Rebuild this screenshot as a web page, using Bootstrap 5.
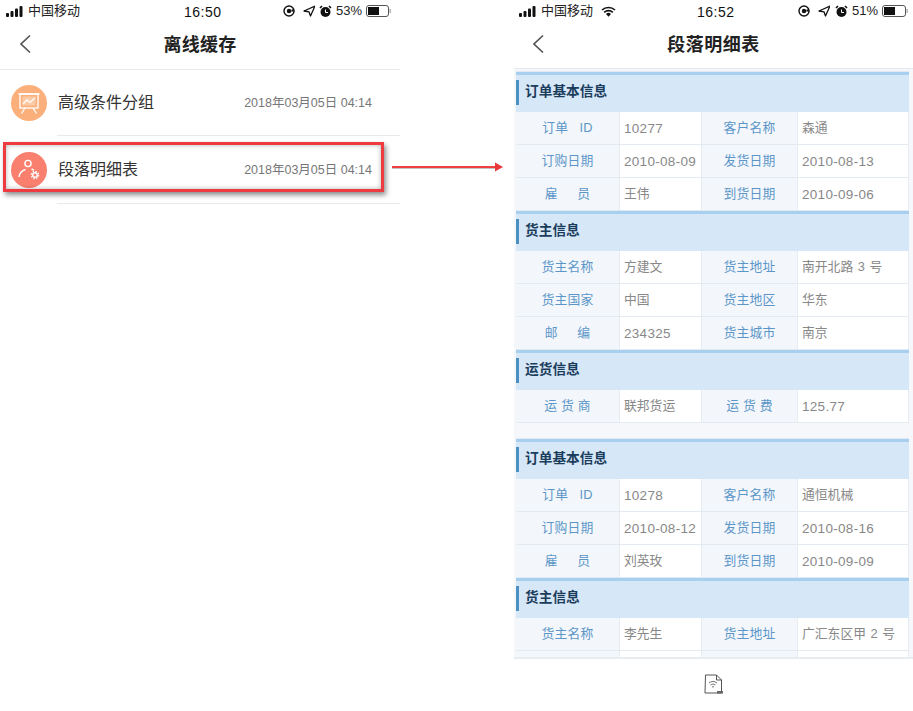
<!DOCTYPE html>
<html lang="zh-CN">
<head>
<meta charset="utf-8">
<title>离线缓存</title>
<link href="https://cdn.jsdelivr.net/npm/bootstrap@5.3.0/dist/css/bootstrap.min.css" rel="stylesheet">
<style>
html,body{margin:0;height:711px;overflow:hidden;background:#fff}
body{font-family:"Liberation Sans","Noto Sans CJK SC",sans-serif;color:#333;position:relative}
.stage{height:711px;gap:114px}
.phone-l{width:400px;flex:none}
.phone-r{width:399px;flex:none}
.sbar{height:22px;font-size:13px;color:#222;position:relative;padding-top:0}
.sbar-l,.sbar-r{position:absolute;top:3px;display:flex;align-items:center;gap:4px;height:16px}
.sbar-pct{font-size:13px}
.sbar-time{position:absolute;top:2px;font-size:14px;font-weight:400;letter-spacing:.5px;color:#111}
.navrow{height:46px;position:relative}
.navtitle{font-size:18px;font-weight:700;letter-spacing:.2px;color:#222;line-height:46px}
.navtitle-wide{letter-spacing:.5px}
.backbtn{position:absolute;top:12px}
.rowline{border-top:1px solid #e9e9e9;margin-top:1px}
.item{position:relative;display:flex;align-items:center;padding-left:11px;background:#fff}
.item::after{content:"";position:absolute;left:57px;right:0;bottom:0;height:1px;background:#e9e9e9}
.item-1{height:66px}
.item-2{height:68px}
.item-name{font-size:16px;margin-left:11px;color:#333}
.item-date{font-size:12.5px;color:#777;margin-left:auto;margin-right:28px}
.panel{height:591px;overflow:hidden;background:#f5f7fa;border-top:1px solid #e6e9ed;border-bottom:2px solid #e9ecef;padding:3px 4px 0 2px}
.sechead{height:40px;background:#d6e7f8;border-top:3px solid #a9cfee;display:flex;align-items:center;font-size:13.7px;font-weight:700;color:#1b3d5c;box-shadow:0 -1px 0 #dfeaf5;padding-bottom:2px}
.sechead span{border-left:3px solid #4a90c2;padding-left:6px;height:25px;line-height:24px}
.datarow{display:grid;grid-template-columns:104px 82px 96px 111px;height:33px;border-bottom:1px solid #e3eaf2}
.cell-k,.cell-v{display:flex;align-items:center;font-size:12.8px;white-space:pre}
.cell-k{justify-content:center;background:#f3f6fb;color:#5c96c8;letter-spacing:.2px;border-right:1px solid #e6ecf3}
.cell-v{background:#fff;color:#888;padding-left:4px;border-right:1px solid #e6ecf3;word-spacing:1px}
.cell-n{font-size:13.5px;letter-spacing:.3px;padding-top:3px}
.blockgap{height:16px}
.bottombar{height:51px}
.redbox{position:absolute;left:3px;top:142px;width:381px;height:50px;border:3px solid #ee3b42;box-shadow:2px 3px 5px rgba(0,0,0,.45),inset 0 0 5px rgba(0,0,0,.3)}
.redarrow{position:absolute;left:390px;top:160px}
</style>
</head>
<body>
<div class="stage d-flex">
  <div class="phone-l">
    <div class="sbar">
      <div class="sbar-l" style="left:6px"><svg width="18" height="11" viewBox="0 0 18 11"><g fill="#111"><rect x="0" y="7" width="3" height="4" rx="1"/><rect x="4.5" y="5" width="3" height="6" rx="1"/><rect x="9" y="2.5" width="3" height="8.5" rx="1"/><rect x="13.5" y="0" width="3" height="11" rx="1"/></g></svg><span>中国移动</span></div>
      <div class="sbar-time" style="left:184px">16:50</div>
      <div class="sbar-r" style="left:283px">
        <svg width="12" height="12" viewBox="0 0 12 12"><circle cx="6" cy="6" r="5" fill="none" stroke="#111" stroke-width="1.4"/><circle cx="6" cy="6" r="2.2" fill="#111"/><path d="M9 4l3 2.5H8z" fill="#111"/></svg>
        <svg width="12" height="12" viewBox="0 0 12 12" style="margin-left:4px"><path d="M12 1L1 6l5 .8L7.500 11z" fill="none" stroke="#111" stroke-width="1.300" stroke-linejoin="round"/></svg>
        <svg width="13" height="13" viewBox="0 0 13 13"><circle cx="6.500" cy="7" r="5" fill="#111"/><path d="M1 3l2-2M12 3l-2-2" stroke="#111" stroke-width="1.600"/><path d="M6.500 4.500v3H9" stroke="#fff" fill="none"/></svg>
        <span class="sbar-pct">53%</span>
        <svg width="25" height="12" viewBox="0 0 25 12"><rect x=".5" y=".5" width="22" height="11" rx="2.500" fill="#fff" stroke="#555"/><rect x="2" y="2" width="11" height="8" fill="#111"/><rect x="23.500" y="4" width="1.300" height="4" fill="#aaa"/></svg>
      </div>
    </div>
    <div class="navrow text-center">
      <svg class="backbtn" style="left:19px" width="12" height="20" viewBox="0 0 12 20"><path d="M11 1.500L2 10l9 8.500" fill="none" stroke="#555" stroke-width="1.700"/></svg>
      <div class="navtitle">离线缓存</div>
    </div>
    <div class="rowline"></div>
    <div class="item item-1">
      <svg width="36" height="36" viewBox="0 0 36 36"><circle cx="18" cy="18" r="18" fill="#fbb07c"/><g fill="none" stroke="#fff" stroke-width="1.300"><rect x="9" y="9" width="18" height="14"/><rect x="11.500" y="11.500" width="13" height="9" fill="#fcc9a5" stroke="none"/><path d="M12 19l4-4 3 2.500 5-4.500M7.500 9h21M14 23l-3.500 5.500M22 23l3.500 5.500"/></g></svg>
      <span class="item-name">高级条件分组</span>
      <span class="item-date">2018年03月05日 04:14</span>
    </div>
    <div class="item item-2">
      <svg width="36" height="36" viewBox="0 0 36 36"><circle cx="18" cy="18" r="18" fill="#f9806f"/><g fill="none" stroke="#fff" stroke-width="1.400"><circle cx="17" cy="11.500" r="3.100"/><path d="M8 25c.5-3.500 3-6.500 6.500-7.500M20.500 17l2.500 1.200"/><circle cx="24" cy="23" r="2.300"/><circle cx="24" cy="23" r="3.700" stroke-dasharray="1.500 1.400" stroke-width="1.200"/></g></svg>
      <span class="item-name">段落明细表</span>
      <span class="item-date">2018年03月05日 04:14</span>
    </div>
  </div>

  <div class="phone-r">
    <div class="sbar">
      <div class="sbar-l" style="left:5px"><svg width="18" height="11" viewBox="0 0 18 11"><g fill="#111"><rect x="0" y="7" width="3" height="4" rx="1"/><rect x="4.500" y="5" width="3" height="6" rx="1"/><rect x="9" y="2.500" width="3" height="8.500" rx="1"/><rect x="13.500" y="0" width="3" height="11" rx="1"/></g></svg><span>中国移动</span>
        <svg class="ms-1" width="15" height="11" viewBox="0 0 15 11"><path d="M1 4a9.500 9.500 0 0 1 13 0M3.200 6.300a6.300 6.300 0 0 1 8.600 0" fill="none" stroke="#111" stroke-width="1.600"/><path d="M5 8a3.600 3.600 0 0 1 5 0l-2.500 2.800z" fill="#111"/></svg>
      </div>
      <div class="sbar-time" style="left:183px">16:52</div>
      <div class="sbar-r" style="left:284px">
        <svg width="12" height="12" viewBox="0 0 12 12"><circle cx="6" cy="6" r="5" fill="none" stroke="#111" stroke-width="1.400"/><circle cx="6" cy="6" r="2.200" fill="#111"/><path d="M9 4l3 2.500H8z" fill="#111"/></svg>
        <svg width="12" height="12" viewBox="0 0 12 12" style="margin-left:4px"><path d="M12 1L1 6l5 .8L7.500 11z" fill="none" stroke="#111" stroke-width="1.300" stroke-linejoin="round"/></svg>
        <svg width="13" height="13" viewBox="0 0 13 13" style="margin-left:1px"><circle cx="6.500" cy="7" r="5" fill="#111"/><path d="M1 3l2-2M12 3l-2-2" stroke="#111" stroke-width="1.600"/><path d="M6.500 4.500v3H9" stroke="#fff" fill="none"/></svg>
        <span class="sbar-pct">51%</span>
        <svg width="26" height="12" viewBox="0 0 26 12"><rect x=".5" y=".5" width="23" height="11" rx="2.500" fill="#fff" stroke="#555"/><rect x="2" y="2" width="11" height="8" fill="#111"/><rect x="24.500" y="4" width="1.300" height="4" fill="#aaa"/></svg>
      </div>
    </div>
    <div class="navrow text-center">
      <svg class="backbtn" style="left:18px" width="12" height="20" viewBox="0 0 12 20"><path d="M11 1.500L2 10l9 8.500" fill="none" stroke="#555" stroke-width="1.700"/></svg>
      <div class="navtitle navtitle-wide">段落明细表</div>
    </div>
    <div class="panel">
      <div class="sechead"><span>订单基本信息</span></div>
      <div class="datarow"><div class="cell-k">订单   ID</div><div class="cell-v cell-n">10277</div><div class="cell-k">客户名称</div><div class="cell-v">森通</div></div>
      <div class="datarow"><div class="cell-k">订购日期</div><div class="cell-v cell-n">2010-08-09</div><div class="cell-k">发货日期</div><div class="cell-v cell-n">2010-08-13</div></div>
      <div class="datarow"><div class="cell-k">雇&emsp;&ensp;员</div><div class="cell-v">王伟</div><div class="cell-k">到货日期</div><div class="cell-v cell-n">2010-09-06</div></div>
      <div class="sechead"><span>货主信息</span></div>
      <div class="datarow"><div class="cell-k">货主名称</div><div class="cell-v">方建文</div><div class="cell-k">货主地址</div><div class="cell-v">南开北路 3 号</div></div>
      <div class="datarow"><div class="cell-k">货主国家</div><div class="cell-v">中国</div><div class="cell-k">货主地区</div><div class="cell-v">华东</div></div>
      <div class="datarow"><div class="cell-k">邮&emsp;&ensp;编</div><div class="cell-v cell-n">234325</div><div class="cell-k">货主城市</div><div class="cell-v">南京</div></div>
      <div class="sechead"><span>运货信息</span></div>
      <div class="datarow"><div class="cell-k">运 货 商</div><div class="cell-v">联邦货运</div><div class="cell-k">运 货 费</div><div class="cell-v cell-n">125.77</div></div>
      <div class="blockgap"></div>
      <div class="sechead"><span>订单基本信息</span></div>
      <div class="datarow"><div class="cell-k">订单   ID</div><div class="cell-v cell-n">10278</div><div class="cell-k">客户名称</div><div class="cell-v">通恒机械</div></div>
      <div class="datarow"><div class="cell-k">订购日期</div><div class="cell-v cell-n">2010-08-12</div><div class="cell-k">发货日期</div><div class="cell-v cell-n">2010-08-16</div></div>
      <div class="datarow"><div class="cell-k">雇&emsp;&ensp;员</div><div class="cell-v">刘英玫</div><div class="cell-k">到货日期</div><div class="cell-v cell-n">2010-09-09</div></div>
      <div class="sechead"><span>货主信息</span></div>
      <div class="datarow"><div class="cell-k">货主名称</div><div class="cell-v">李先生</div><div class="cell-k">货主地址</div><div class="cell-v">广汇东区甲 2 号</div></div>
      <div class="datarow"><div class="cell-k"></div><div class="cell-v"></div><div class="cell-k"></div><div class="cell-v"></div></div>
    </div>
    <div class="bottombar d-flex align-items-center justify-content-center">
      <svg width="20" height="21" viewBox="0 0 20 21"><path d="M1.500 1h11l5 5v13h-16.500z M12.500 1v5h5" fill="none" stroke="#555" stroke-width="1"/><path d="M5 9a6.500 6.500 0 0 1 8 0M6.500 11a4 4 0 0 1 5 0M8 13a1.800 1.800 0 0 1 2 0" fill="none" stroke="#777" stroke-width="1"/><rect x="13" y="17" width="6" height="2.500" fill="#666"/></svg>
    </div>
  </div>
</div>
<div class="redbox"></div>
<svg class="redarrow" width="116" height="14" viewBox="0 0 116 14"><path d="M2 8h104" stroke="#aaa" stroke-width="2" opacity=".7"/><path d="M2 7h104" stroke="#ee4040" stroke-width="2"/><path d="M105 2.500l8 4.500-8 4.500z" fill="#e8383c"/></svg>
</body>
</html>
